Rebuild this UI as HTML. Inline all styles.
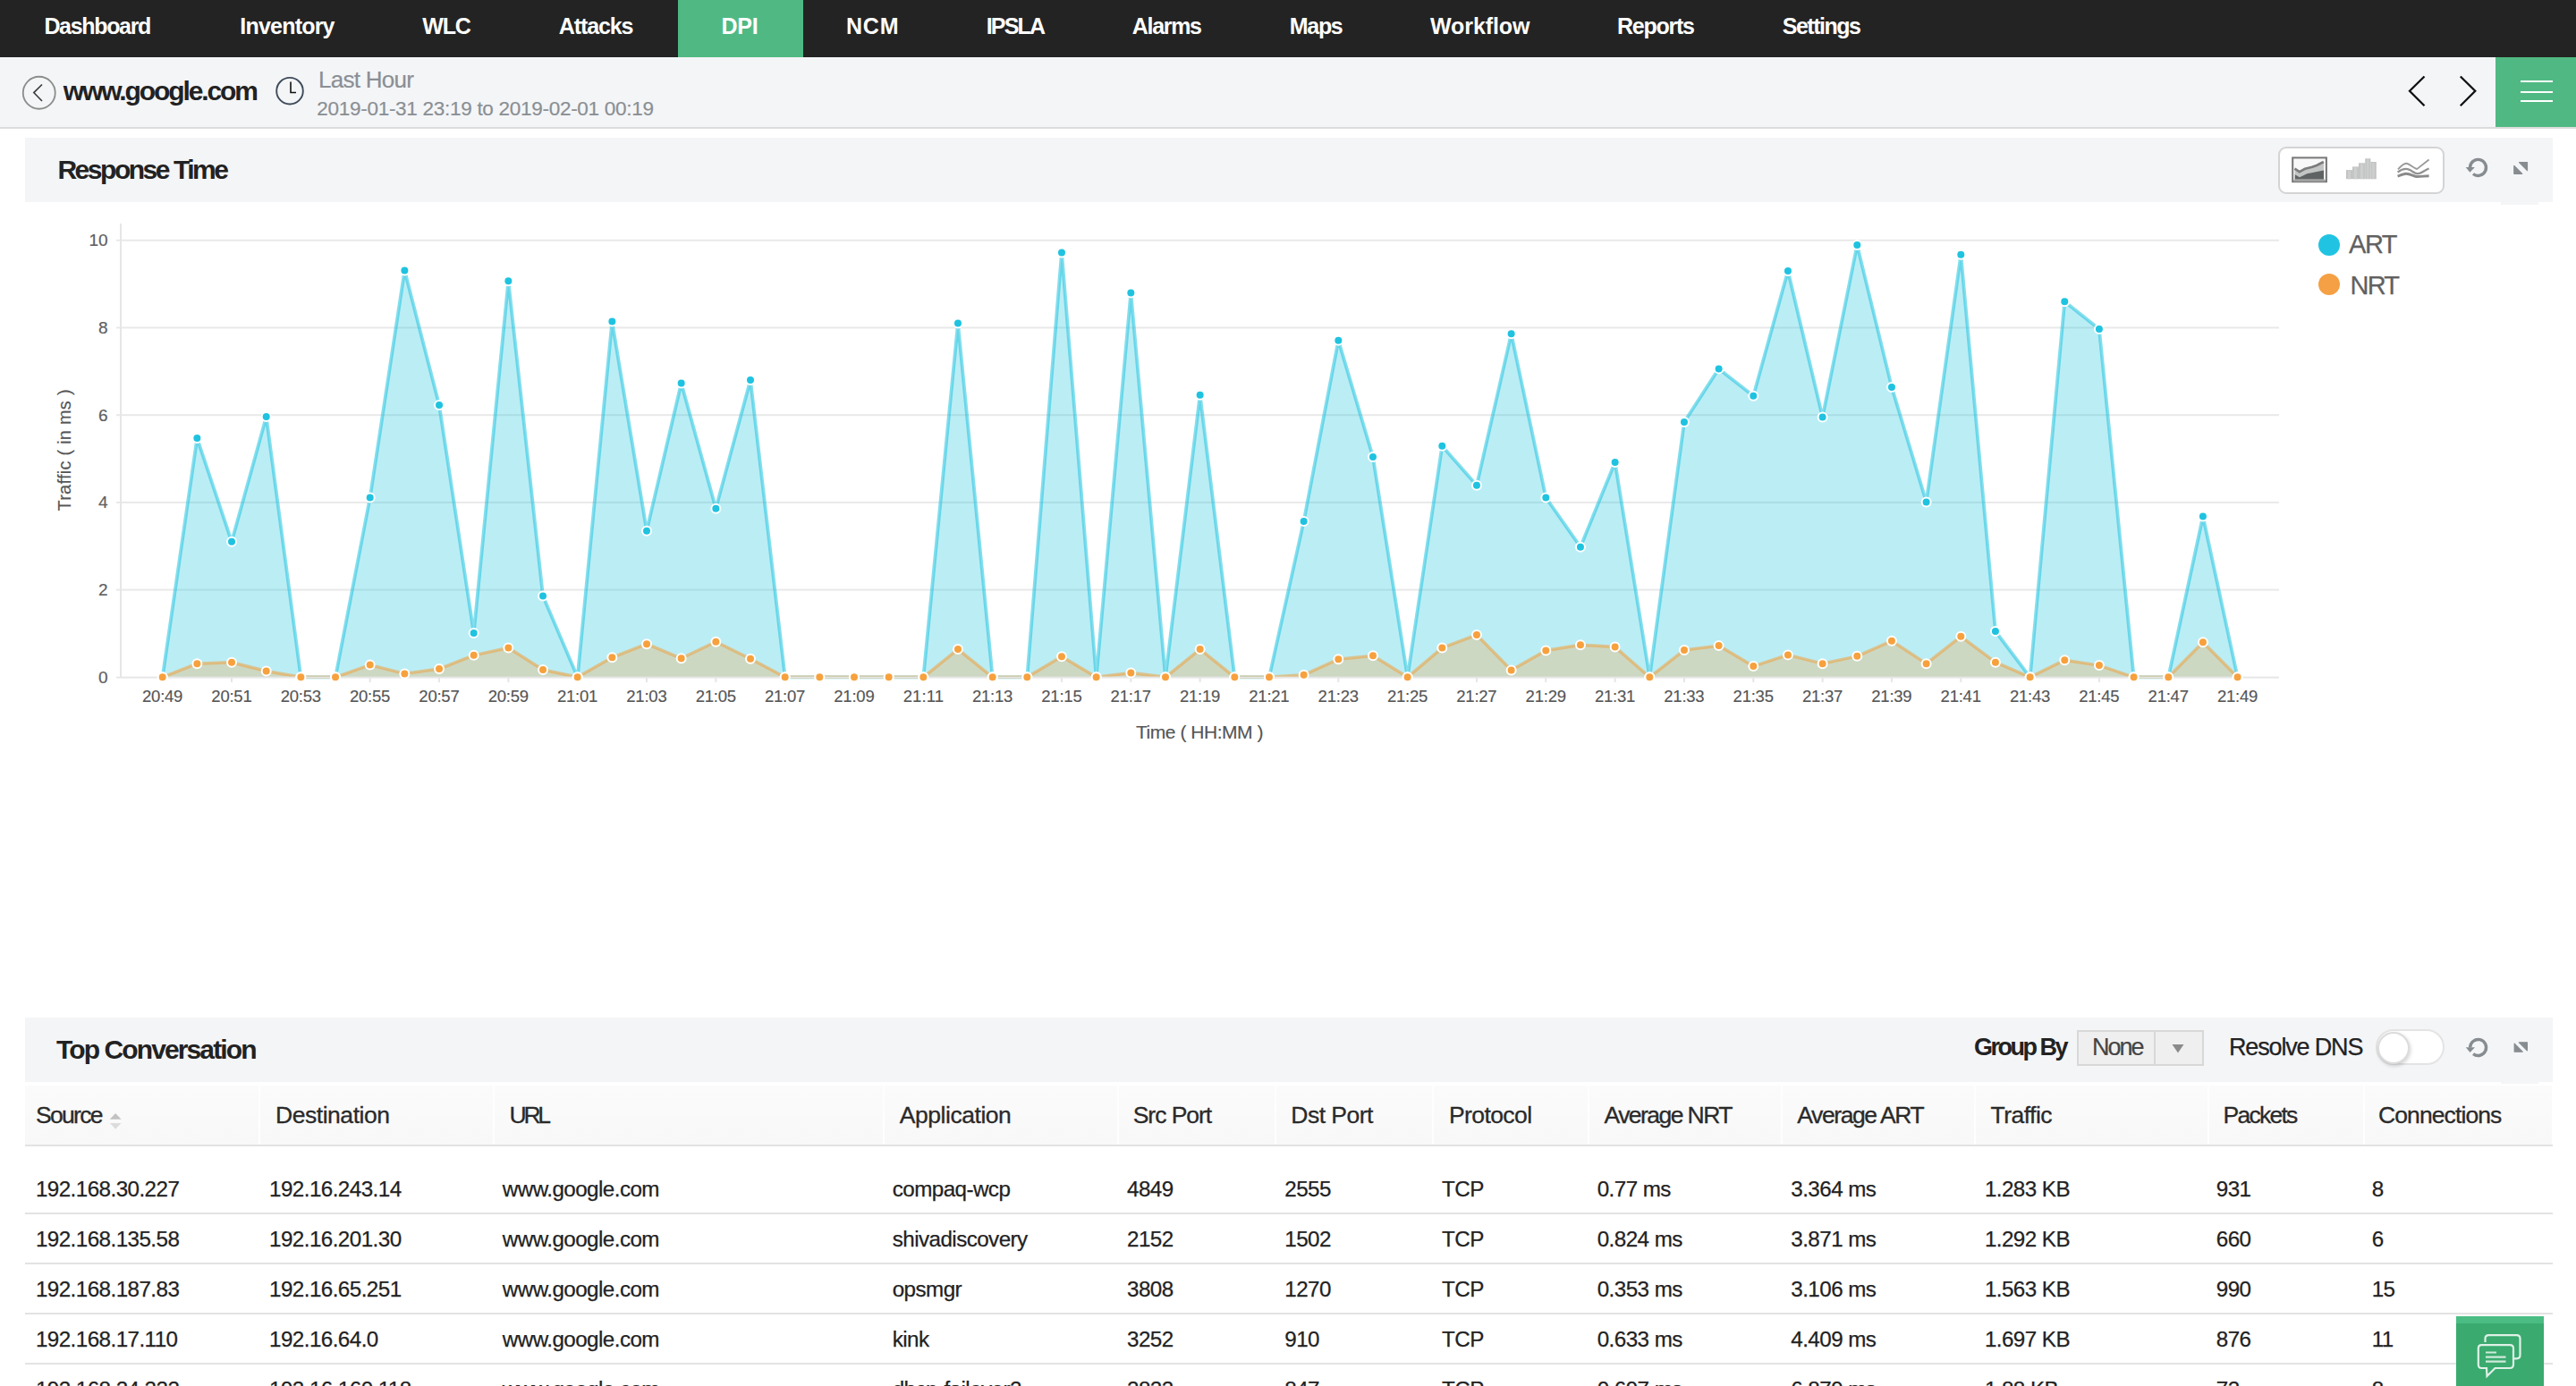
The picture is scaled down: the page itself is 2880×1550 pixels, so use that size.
<!DOCTYPE html>
<html><head><meta charset="utf-8"><style>
html,body{margin:0;padding:0;}
body{width:2880px;height:1550px;overflow:hidden;background:#fff;position:relative;font-family:"Liberation Sans",sans-serif;}
.t{position:absolute;white-space:nowrap;line-height:1;}
</style></head><body>
<div style="position:absolute;left:0;top:0;width:2880px;height:64px;background:#232323"></div>
<div style="position:absolute;left:758px;top:0;width:140px;height:64px;background:#50b983"></div>
<div class="t" style="left:49.40px;top:16.84px;font-size:25px;color:#ffffff;font-weight:bold;letter-spacing:-1.325px;">Dashboard</div>
<div class="t" style="left:268.30px;top:16.84px;font-size:25px;color:#ffffff;font-weight:bold;letter-spacing:-0.788px;">Inventory</div>
<div class="t" style="left:472.30px;top:16.84px;font-size:25px;color:#ffffff;font-weight:bold;letter-spacing:-1.200px;">WLC</div>
<div class="t" style="left:624.70px;top:16.84px;font-size:25px;color:#ffffff;font-weight:bold;letter-spacing:-1.083px;">Attacks</div>
<div class="t" style="left:806.50px;top:16.84px;font-size:25px;color:#ffffff;font-weight:bold;letter-spacing:-0.225px;">DPI</div>
<div class="t" style="left:946.00px;top:16.84px;font-size:25px;color:#ffffff;font-weight:bold;letter-spacing:0.800px;">NCM</div>
<div class="t" style="left:1102.75px;top:16.84px;font-size:25px;color:#ffffff;font-weight:bold;letter-spacing:-1.837px;">IPSLA</div>
<div class="t" style="left:1265.80px;top:16.84px;font-size:25px;color:#ffffff;font-weight:bold;letter-spacing:-1.320px;">Alarms</div>
<div class="t" style="left:1441.75px;top:16.84px;font-size:25px;color:#ffffff;font-weight:bold;letter-spacing:-1.300px;">Maps</div>
<div class="t" style="left:1599.00px;top:16.84px;font-size:25px;color:#ffffff;font-weight:bold;letter-spacing:-0.086px;">Workflow</div>
<div class="t" style="left:1808.00px;top:16.84px;font-size:25px;color:#ffffff;font-weight:bold;letter-spacing:-1.250px;">Reports</div>
<div class="t" style="left:1992.70px;top:16.84px;font-size:25px;color:#ffffff;font-weight:bold;letter-spacing:-1.471px;">Settings</div>
<div style="position:absolute;left:0;top:64px;width:2880px;height:78px;background:#f4f5f7"></div>
<div style="position:absolute;left:0;top:142px;width:2880px;height:2px;background:#dcdcdd"></div>
<div style="position:absolute;left:2790px;top:64px;width:90px;height:78px;background:#50b983"></div>
<div style="position:absolute;left:2818px;top:90px;width:36px;height:2px;background:#fff"></div>
<div style="position:absolute;left:2818px;top:102px;width:36px;height:2px;background:#fff"></div>
<div style="position:absolute;left:2818px;top:112px;width:36px;height:2px;background:#fff"></div>
<svg style="position:absolute;left:0;top:64px" width="2880" height="78" viewBox="0 64 2880 78">
<circle cx="43.75" cy="103.75" r="18" fill="none" stroke="#8c8c8c" stroke-width="1.8"/>
<polyline points="47,94.5 37.8,103.6 47,113" fill="none" stroke="#3a3a3a" stroke-width="1.6"/>
<circle cx="324" cy="101.7" r="14.8" fill="none" stroke="#3f4b5a" stroke-width="1.9"/>
<polyline points="325,91.5 325,103.5 331,103.5" fill="none" stroke="#111" stroke-width="1.6"/>
<polyline points="2710.5,85.5 2694,101.8 2710.5,118.3" fill="none" stroke="#111" stroke-width="2.3"/>
<polyline points="2750.8,85.5 2767.3,101.8 2750.8,118.3" fill="none" stroke="#111" stroke-width="2.3"/>
</svg>
<div class="t" style="left:70.70px;top:87.11px;font-size:30px;color:#222222;font-weight:bold;letter-spacing:-2.100px;">www.google.com</div>
<div class="t" style="left:356.00px;top:75.69px;font-size:26px;color:#8a8f94;letter-spacing:-0.713px;-webkit-text-stroke:0.2px #8a8f94;">Last Hour</div>
<div class="t" style="left:354.30px;top:110.85px;font-size:22.5px;color:#8a8f93;letter-spacing:-0.283px;-webkit-text-stroke:0.2px #8a8f93;">2019-01-31 23:19 to 2019-02-01 00:19</div>
<div style="position:absolute;left:28px;top:154px;width:2826px;height:72px;background:#f4f5f7"></div>
<div style="position:absolute;left:2796px;top:226px;width:42px;height:3px;background:#f4f5f7"></div>
<div class="t" style="left:64.40px;top:175.20px;font-size:30px;color:#222222;font-weight:bold;letter-spacing:-2.467px;">Response Time</div>
<div style="position:absolute;left:2547px;top:163.5px;width:182px;height:49.5px;border:2px solid #d4d4d4;border-radius:9px;background:#fff"></div>
<svg style="position:absolute;left:0;top:0" width="2880" height="1550">
<rect x="135" y="658.59" width="2413" height="2" fill="#e9e9e9"/>
<rect x="130" y="658.59" width="5" height="2" fill="#e9e9e9"/>
<rect x="135" y="560.88" width="2413" height="2" fill="#e9e9e9"/>
<rect x="130" y="560.88" width="5" height="2" fill="#e9e9e9"/>
<rect x="135" y="463.17" width="2413" height="2" fill="#e9e9e9"/>
<rect x="130" y="463.17" width="5" height="2" fill="#e9e9e9"/>
<rect x="135" y="365.46" width="2413" height="2" fill="#e9e9e9"/>
<rect x="130" y="365.46" width="5" height="2" fill="#e9e9e9"/>
<rect x="135" y="267.75" width="2413" height="2" fill="#e9e9e9"/>
<rect x="130" y="267.75" width="5" height="2" fill="#e9e9e9"/>
<rect x="134" y="250" width="2" height="508" fill="#e6e6e6"/>
<path d="M181.70,757.30 L181.70,757.30 L220.36,490.06 L259.03,605.85 L297.69,466.12 L336.36,757.30 L375.02,757.30 L413.69,556.51 L452.35,302.46 L491.02,452.93 L529.68,707.96 L568.35,314.19 L607.01,666.43 L645.68,757.30 L684.35,359.62 L723.01,593.64 L761.67,428.51 L800.34,568.72 L839.00,425.09 L877.67,757.30 L916.34,757.30 L955.00,757.30 L993.66,757.30 L1032.33,757.30 L1070.99,361.57 L1109.66,757.30 L1148.33,757.30 L1186.99,282.43 L1225.65,757.30 L1264.32,327.38 L1302.99,757.30 L1341.65,441.70 L1380.32,757.30 L1418.98,757.30 L1457.64,582.89 L1496.31,380.63 L1534.97,511.07 L1573.64,757.30 L1612.31,498.86 L1650.97,542.83 L1689.63,373.30 L1728.30,556.51 L1766.96,611.71 L1805.63,516.93 L1844.30,757.30 L1882.96,471.99 L1921.62,412.38 L1960.29,442.67 L1998.95,302.95 L2037.62,466.61 L2076.28,274.12 L2114.95,432.90 L2153.61,561.39 L2192.28,284.87 L2230.94,706.00 L2269.61,757.30 L2308.27,337.15 L2346.94,367.93 L2385.60,757.30 L2424.27,757.30 L2462.93,577.51 L2501.60,757.30 L2501.60,757.30 Z" fill="rgba(31,194,223,0.30)"/>
<path d="M181.70,757.30 L220.36,490.06 L259.03,605.85 L297.69,466.12 L336.36,757.30 L375.02,757.30 L413.69,556.51 L452.35,302.46 L491.02,452.93 L529.68,707.96 L568.35,314.19 L607.01,666.43 L645.68,757.30 L684.35,359.62 L723.01,593.64 L761.67,428.51 L800.34,568.72 L839.00,425.09 L877.67,757.30 L916.34,757.30 L955.00,757.30 L993.66,757.30 L1032.33,757.30 L1070.99,361.57 L1109.66,757.30 L1148.33,757.30 L1186.99,282.43 L1225.65,757.30 L1264.32,327.38 L1302.99,757.30 L1341.65,441.70 L1380.32,757.30 L1418.98,757.30 L1457.64,582.89 L1496.31,380.63 L1534.97,511.07 L1573.64,757.30 L1612.31,498.86 L1650.97,542.83 L1689.63,373.30 L1728.30,556.51 L1766.96,611.71 L1805.63,516.93 L1844.30,757.30 L1882.96,471.99 L1921.62,412.38 L1960.29,442.67 L1998.95,302.95 L2037.62,466.61 L2076.28,274.12 L2114.95,432.90 L2153.61,561.39 L2192.28,284.87 L2230.94,706.00 L2269.61,757.30 L2308.27,337.15 L2346.94,367.93 L2385.60,757.30 L2424.27,757.30 L2462.93,577.51 L2501.60,757.30" fill="none" stroke="rgba(31,194,223,0.55)" stroke-width="3.8" stroke-linejoin="round"/>
<path d="M181.70,757.30 L181.70,757.30 L220.36,742.15 L259.03,740.69 L297.69,750.46 L336.36,757.30 L375.02,757.30 L413.69,743.62 L452.35,753.39 L491.02,748.02 L529.68,732.87 L568.35,724.57 L607.01,748.99 L645.68,757.30 L684.35,735.32 L723.01,720.17 L761.67,736.29 L800.34,717.73 L839.00,736.78 L877.67,757.30 L916.34,757.30 L955.00,757.30 L993.66,757.30 L1032.33,757.30 L1070.99,726.03 L1109.66,757.30 L1148.33,757.30 L1186.99,734.34 L1225.65,757.30 L1264.32,752.41 L1302.99,757.30 L1341.65,726.03 L1380.32,757.30 L1418.98,757.30 L1457.64,754.86 L1496.31,737.27 L1534.97,733.36 L1573.64,757.30 L1612.31,724.57 L1650.97,709.91 L1689.63,749.48 L1728.30,727.50 L1766.96,721.15 L1805.63,723.59 L1844.30,757.30 L1882.96,727.01 L1921.62,722.12 L1960.29,745.09 L1998.95,732.38 L2037.62,742.15 L2076.28,733.85 L2114.95,716.75 L2153.61,742.15 L2192.28,711.86 L2230.94,740.69 L2269.61,757.30 L2308.27,738.25 L2346.94,744.11 L2385.60,757.30 L2424.27,757.30 L2462.93,718.22 L2501.60,757.30 L2501.60,757.30 Z" fill="rgba(247,161,62,0.28)"/>
<path d="M181.70,757.30 L220.36,742.15 L259.03,740.69 L297.69,750.46 L336.36,757.30 L375.02,757.30 L413.69,743.62 L452.35,753.39 L491.02,748.02 L529.68,732.87 L568.35,724.57 L607.01,748.99 L645.68,757.30 L684.35,735.32 L723.01,720.17 L761.67,736.29 L800.34,717.73 L839.00,736.78 L877.67,757.30 L916.34,757.30 L955.00,757.30 L993.66,757.30 L1032.33,757.30 L1070.99,726.03 L1109.66,757.30 L1148.33,757.30 L1186.99,734.34 L1225.65,757.30 L1264.32,752.41 L1302.99,757.30 L1341.65,726.03 L1380.32,757.30 L1418.98,757.30 L1457.64,754.86 L1496.31,737.27 L1534.97,733.36 L1573.64,757.30 L1612.31,724.57 L1650.97,709.91 L1689.63,749.48 L1728.30,727.50 L1766.96,721.15 L1805.63,723.59 L1844.30,757.30 L1882.96,727.01 L1921.62,722.12 L1960.29,745.09 L1998.95,732.38 L2037.62,742.15 L2076.28,733.85 L2114.95,716.75 L2153.61,742.15 L2192.28,711.86 L2230.94,740.69 L2269.61,757.30 L2308.27,738.25 L2346.94,744.11 L2385.60,757.30 L2424.27,757.30 L2462.93,718.22 L2501.60,757.30" fill="none" stroke="rgba(240,160,60,0.55)" stroke-width="3.5" stroke-linejoin="round"/>
<rect x="130" y="756.6" width="2418" height="2" fill="#e6e6e6"/>
<rect x="180.70" y="758" width="2" height="5" fill="#e6e6e6"/>
<rect x="258.03" y="758" width="2" height="5" fill="#e6e6e6"/>
<rect x="335.36" y="758" width="2" height="5" fill="#e6e6e6"/>
<rect x="412.69" y="758" width="2" height="5" fill="#e6e6e6"/>
<rect x="490.02" y="758" width="2" height="5" fill="#e6e6e6"/>
<rect x="567.35" y="758" width="2" height="5" fill="#e6e6e6"/>
<rect x="644.68" y="758" width="2" height="5" fill="#e6e6e6"/>
<rect x="722.01" y="758" width="2" height="5" fill="#e6e6e6"/>
<rect x="799.34" y="758" width="2" height="5" fill="#e6e6e6"/>
<rect x="876.67" y="758" width="2" height="5" fill="#e6e6e6"/>
<rect x="954.00" y="758" width="2" height="5" fill="#e6e6e6"/>
<rect x="1031.33" y="758" width="2" height="5" fill="#e6e6e6"/>
<rect x="1108.66" y="758" width="2" height="5" fill="#e6e6e6"/>
<rect x="1185.99" y="758" width="2" height="5" fill="#e6e6e6"/>
<rect x="1263.32" y="758" width="2" height="5" fill="#e6e6e6"/>
<rect x="1340.65" y="758" width="2" height="5" fill="#e6e6e6"/>
<rect x="1417.98" y="758" width="2" height="5" fill="#e6e6e6"/>
<rect x="1495.31" y="758" width="2" height="5" fill="#e6e6e6"/>
<rect x="1572.64" y="758" width="2" height="5" fill="#e6e6e6"/>
<rect x="1649.97" y="758" width="2" height="5" fill="#e6e6e6"/>
<rect x="1727.30" y="758" width="2" height="5" fill="#e6e6e6"/>
<rect x="1804.63" y="758" width="2" height="5" fill="#e6e6e6"/>
<rect x="1881.96" y="758" width="2" height="5" fill="#e6e6e6"/>
<rect x="1959.29" y="758" width="2" height="5" fill="#e6e6e6"/>
<rect x="2036.62" y="758" width="2" height="5" fill="#e6e6e6"/>
<rect x="2113.95" y="758" width="2" height="5" fill="#e6e6e6"/>
<rect x="2191.28" y="758" width="2" height="5" fill="#e6e6e6"/>
<rect x="2268.61" y="758" width="2" height="5" fill="#e6e6e6"/>
<rect x="2345.94" y="758" width="2" height="5" fill="#e6e6e6"/>
<rect x="2423.27" y="758" width="2" height="5" fill="#e6e6e6"/>
<rect x="2500.60" y="758" width="2" height="5" fill="#e6e6e6"/>
<circle cx="181.70" cy="757.30" r="5" fill="#1fc3e0" stroke="#fff" stroke-width="2"/>
<circle cx="220.36" cy="490.06" r="5" fill="#1fc3e0" stroke="#fff" stroke-width="2"/>
<circle cx="259.03" cy="605.85" r="5" fill="#1fc3e0" stroke="#fff" stroke-width="2"/>
<circle cx="297.69" cy="466.12" r="5" fill="#1fc3e0" stroke="#fff" stroke-width="2"/>
<circle cx="336.36" cy="757.30" r="5" fill="#1fc3e0" stroke="#fff" stroke-width="2"/>
<circle cx="375.02" cy="757.30" r="5" fill="#1fc3e0" stroke="#fff" stroke-width="2"/>
<circle cx="413.69" cy="556.51" r="5" fill="#1fc3e0" stroke="#fff" stroke-width="2"/>
<circle cx="452.35" cy="302.46" r="5" fill="#1fc3e0" stroke="#fff" stroke-width="2"/>
<circle cx="491.02" cy="452.93" r="5" fill="#1fc3e0" stroke="#fff" stroke-width="2"/>
<circle cx="529.68" cy="707.96" r="5" fill="#1fc3e0" stroke="#fff" stroke-width="2"/>
<circle cx="568.35" cy="314.19" r="5" fill="#1fc3e0" stroke="#fff" stroke-width="2"/>
<circle cx="607.01" cy="666.43" r="5" fill="#1fc3e0" stroke="#fff" stroke-width="2"/>
<circle cx="645.68" cy="757.30" r="5" fill="#1fc3e0" stroke="#fff" stroke-width="2"/>
<circle cx="684.35" cy="359.62" r="5" fill="#1fc3e0" stroke="#fff" stroke-width="2"/>
<circle cx="723.01" cy="593.64" r="5" fill="#1fc3e0" stroke="#fff" stroke-width="2"/>
<circle cx="761.67" cy="428.51" r="5" fill="#1fc3e0" stroke="#fff" stroke-width="2"/>
<circle cx="800.34" cy="568.72" r="5" fill="#1fc3e0" stroke="#fff" stroke-width="2"/>
<circle cx="839.00" cy="425.09" r="5" fill="#1fc3e0" stroke="#fff" stroke-width="2"/>
<circle cx="877.67" cy="757.30" r="5" fill="#1fc3e0" stroke="#fff" stroke-width="2"/>
<circle cx="916.34" cy="757.30" r="5" fill="#1fc3e0" stroke="#fff" stroke-width="2"/>
<circle cx="955.00" cy="757.30" r="5" fill="#1fc3e0" stroke="#fff" stroke-width="2"/>
<circle cx="993.66" cy="757.30" r="5" fill="#1fc3e0" stroke="#fff" stroke-width="2"/>
<circle cx="1032.33" cy="757.30" r="5" fill="#1fc3e0" stroke="#fff" stroke-width="2"/>
<circle cx="1070.99" cy="361.57" r="5" fill="#1fc3e0" stroke="#fff" stroke-width="2"/>
<circle cx="1109.66" cy="757.30" r="5" fill="#1fc3e0" stroke="#fff" stroke-width="2"/>
<circle cx="1148.33" cy="757.30" r="5" fill="#1fc3e0" stroke="#fff" stroke-width="2"/>
<circle cx="1186.99" cy="282.43" r="5" fill="#1fc3e0" stroke="#fff" stroke-width="2"/>
<circle cx="1225.65" cy="757.30" r="5" fill="#1fc3e0" stroke="#fff" stroke-width="2"/>
<circle cx="1264.32" cy="327.38" r="5" fill="#1fc3e0" stroke="#fff" stroke-width="2"/>
<circle cx="1302.99" cy="757.30" r="5" fill="#1fc3e0" stroke="#fff" stroke-width="2"/>
<circle cx="1341.65" cy="441.70" r="5" fill="#1fc3e0" stroke="#fff" stroke-width="2"/>
<circle cx="1380.32" cy="757.30" r="5" fill="#1fc3e0" stroke="#fff" stroke-width="2"/>
<circle cx="1418.98" cy="757.30" r="5" fill="#1fc3e0" stroke="#fff" stroke-width="2"/>
<circle cx="1457.64" cy="582.89" r="5" fill="#1fc3e0" stroke="#fff" stroke-width="2"/>
<circle cx="1496.31" cy="380.63" r="5" fill="#1fc3e0" stroke="#fff" stroke-width="2"/>
<circle cx="1534.97" cy="511.07" r="5" fill="#1fc3e0" stroke="#fff" stroke-width="2"/>
<circle cx="1573.64" cy="757.30" r="5" fill="#1fc3e0" stroke="#fff" stroke-width="2"/>
<circle cx="1612.31" cy="498.86" r="5" fill="#1fc3e0" stroke="#fff" stroke-width="2"/>
<circle cx="1650.97" cy="542.83" r="5" fill="#1fc3e0" stroke="#fff" stroke-width="2"/>
<circle cx="1689.63" cy="373.30" r="5" fill="#1fc3e0" stroke="#fff" stroke-width="2"/>
<circle cx="1728.30" cy="556.51" r="5" fill="#1fc3e0" stroke="#fff" stroke-width="2"/>
<circle cx="1766.96" cy="611.71" r="5" fill="#1fc3e0" stroke="#fff" stroke-width="2"/>
<circle cx="1805.63" cy="516.93" r="5" fill="#1fc3e0" stroke="#fff" stroke-width="2"/>
<circle cx="1844.30" cy="757.30" r="5" fill="#1fc3e0" stroke="#fff" stroke-width="2"/>
<circle cx="1882.96" cy="471.99" r="5" fill="#1fc3e0" stroke="#fff" stroke-width="2"/>
<circle cx="1921.62" cy="412.38" r="5" fill="#1fc3e0" stroke="#fff" stroke-width="2"/>
<circle cx="1960.29" cy="442.67" r="5" fill="#1fc3e0" stroke="#fff" stroke-width="2"/>
<circle cx="1998.95" cy="302.95" r="5" fill="#1fc3e0" stroke="#fff" stroke-width="2"/>
<circle cx="2037.62" cy="466.61" r="5" fill="#1fc3e0" stroke="#fff" stroke-width="2"/>
<circle cx="2076.28" cy="274.12" r="5" fill="#1fc3e0" stroke="#fff" stroke-width="2"/>
<circle cx="2114.95" cy="432.90" r="5" fill="#1fc3e0" stroke="#fff" stroke-width="2"/>
<circle cx="2153.61" cy="561.39" r="5" fill="#1fc3e0" stroke="#fff" stroke-width="2"/>
<circle cx="2192.28" cy="284.87" r="5" fill="#1fc3e0" stroke="#fff" stroke-width="2"/>
<circle cx="2230.94" cy="706.00" r="5" fill="#1fc3e0" stroke="#fff" stroke-width="2"/>
<circle cx="2269.61" cy="757.30" r="5" fill="#1fc3e0" stroke="#fff" stroke-width="2"/>
<circle cx="2308.27" cy="337.15" r="5" fill="#1fc3e0" stroke="#fff" stroke-width="2"/>
<circle cx="2346.94" cy="367.93" r="5" fill="#1fc3e0" stroke="#fff" stroke-width="2"/>
<circle cx="2385.60" cy="757.30" r="5" fill="#1fc3e0" stroke="#fff" stroke-width="2"/>
<circle cx="2424.27" cy="757.30" r="5" fill="#1fc3e0" stroke="#fff" stroke-width="2"/>
<circle cx="2462.93" cy="577.51" r="5" fill="#1fc3e0" stroke="#fff" stroke-width="2"/>
<circle cx="2501.60" cy="757.30" r="5" fill="#1fc3e0" stroke="#fff" stroke-width="2"/>
<circle cx="181.70" cy="757.30" r="5" fill="#f7a13e" stroke="#fff" stroke-width="2"/>
<circle cx="220.36" cy="742.15" r="5" fill="#f7a13e" stroke="#fff" stroke-width="2"/>
<circle cx="259.03" cy="740.69" r="5" fill="#f7a13e" stroke="#fff" stroke-width="2"/>
<circle cx="297.69" cy="750.46" r="5" fill="#f7a13e" stroke="#fff" stroke-width="2"/>
<circle cx="336.36" cy="757.30" r="5" fill="#f7a13e" stroke="#fff" stroke-width="2"/>
<circle cx="375.02" cy="757.30" r="5" fill="#f7a13e" stroke="#fff" stroke-width="2"/>
<circle cx="413.69" cy="743.62" r="5" fill="#f7a13e" stroke="#fff" stroke-width="2"/>
<circle cx="452.35" cy="753.39" r="5" fill="#f7a13e" stroke="#fff" stroke-width="2"/>
<circle cx="491.02" cy="748.02" r="5" fill="#f7a13e" stroke="#fff" stroke-width="2"/>
<circle cx="529.68" cy="732.87" r="5" fill="#f7a13e" stroke="#fff" stroke-width="2"/>
<circle cx="568.35" cy="724.57" r="5" fill="#f7a13e" stroke="#fff" stroke-width="2"/>
<circle cx="607.01" cy="748.99" r="5" fill="#f7a13e" stroke="#fff" stroke-width="2"/>
<circle cx="645.68" cy="757.30" r="5" fill="#f7a13e" stroke="#fff" stroke-width="2"/>
<circle cx="684.35" cy="735.32" r="5" fill="#f7a13e" stroke="#fff" stroke-width="2"/>
<circle cx="723.01" cy="720.17" r="5" fill="#f7a13e" stroke="#fff" stroke-width="2"/>
<circle cx="761.67" cy="736.29" r="5" fill="#f7a13e" stroke="#fff" stroke-width="2"/>
<circle cx="800.34" cy="717.73" r="5" fill="#f7a13e" stroke="#fff" stroke-width="2"/>
<circle cx="839.00" cy="736.78" r="5" fill="#f7a13e" stroke="#fff" stroke-width="2"/>
<circle cx="877.67" cy="757.30" r="5" fill="#f7a13e" stroke="#fff" stroke-width="2"/>
<circle cx="916.34" cy="757.30" r="5" fill="#f7a13e" stroke="#fff" stroke-width="2"/>
<circle cx="955.00" cy="757.30" r="5" fill="#f7a13e" stroke="#fff" stroke-width="2"/>
<circle cx="993.66" cy="757.30" r="5" fill="#f7a13e" stroke="#fff" stroke-width="2"/>
<circle cx="1032.33" cy="757.30" r="5" fill="#f7a13e" stroke="#fff" stroke-width="2"/>
<circle cx="1070.99" cy="726.03" r="5" fill="#f7a13e" stroke="#fff" stroke-width="2"/>
<circle cx="1109.66" cy="757.30" r="5" fill="#f7a13e" stroke="#fff" stroke-width="2"/>
<circle cx="1148.33" cy="757.30" r="5" fill="#f7a13e" stroke="#fff" stroke-width="2"/>
<circle cx="1186.99" cy="734.34" r="5" fill="#f7a13e" stroke="#fff" stroke-width="2"/>
<circle cx="1225.65" cy="757.30" r="5" fill="#f7a13e" stroke="#fff" stroke-width="2"/>
<circle cx="1264.32" cy="752.41" r="5" fill="#f7a13e" stroke="#fff" stroke-width="2"/>
<circle cx="1302.99" cy="757.30" r="5" fill="#f7a13e" stroke="#fff" stroke-width="2"/>
<circle cx="1341.65" cy="726.03" r="5" fill="#f7a13e" stroke="#fff" stroke-width="2"/>
<circle cx="1380.32" cy="757.30" r="5" fill="#f7a13e" stroke="#fff" stroke-width="2"/>
<circle cx="1418.98" cy="757.30" r="5" fill="#f7a13e" stroke="#fff" stroke-width="2"/>
<circle cx="1457.64" cy="754.86" r="5" fill="#f7a13e" stroke="#fff" stroke-width="2"/>
<circle cx="1496.31" cy="737.27" r="5" fill="#f7a13e" stroke="#fff" stroke-width="2"/>
<circle cx="1534.97" cy="733.36" r="5" fill="#f7a13e" stroke="#fff" stroke-width="2"/>
<circle cx="1573.64" cy="757.30" r="5" fill="#f7a13e" stroke="#fff" stroke-width="2"/>
<circle cx="1612.31" cy="724.57" r="5" fill="#f7a13e" stroke="#fff" stroke-width="2"/>
<circle cx="1650.97" cy="709.91" r="5" fill="#f7a13e" stroke="#fff" stroke-width="2"/>
<circle cx="1689.63" cy="749.48" r="5" fill="#f7a13e" stroke="#fff" stroke-width="2"/>
<circle cx="1728.30" cy="727.50" r="5" fill="#f7a13e" stroke="#fff" stroke-width="2"/>
<circle cx="1766.96" cy="721.15" r="5" fill="#f7a13e" stroke="#fff" stroke-width="2"/>
<circle cx="1805.63" cy="723.59" r="5" fill="#f7a13e" stroke="#fff" stroke-width="2"/>
<circle cx="1844.30" cy="757.30" r="5" fill="#f7a13e" stroke="#fff" stroke-width="2"/>
<circle cx="1882.96" cy="727.01" r="5" fill="#f7a13e" stroke="#fff" stroke-width="2"/>
<circle cx="1921.62" cy="722.12" r="5" fill="#f7a13e" stroke="#fff" stroke-width="2"/>
<circle cx="1960.29" cy="745.09" r="5" fill="#f7a13e" stroke="#fff" stroke-width="2"/>
<circle cx="1998.95" cy="732.38" r="5" fill="#f7a13e" stroke="#fff" stroke-width="2"/>
<circle cx="2037.62" cy="742.15" r="5" fill="#f7a13e" stroke="#fff" stroke-width="2"/>
<circle cx="2076.28" cy="733.85" r="5" fill="#f7a13e" stroke="#fff" stroke-width="2"/>
<circle cx="2114.95" cy="716.75" r="5" fill="#f7a13e" stroke="#fff" stroke-width="2"/>
<circle cx="2153.61" cy="742.15" r="5" fill="#f7a13e" stroke="#fff" stroke-width="2"/>
<circle cx="2192.28" cy="711.86" r="5" fill="#f7a13e" stroke="#fff" stroke-width="2"/>
<circle cx="2230.94" cy="740.69" r="5" fill="#f7a13e" stroke="#fff" stroke-width="2"/>
<circle cx="2269.61" cy="757.30" r="5" fill="#f7a13e" stroke="#fff" stroke-width="2"/>
<circle cx="2308.27" cy="738.25" r="5" fill="#f7a13e" stroke="#fff" stroke-width="2"/>
<circle cx="2346.94" cy="744.11" r="5" fill="#f7a13e" stroke="#fff" stroke-width="2"/>
<circle cx="2385.60" cy="757.30" r="5" fill="#f7a13e" stroke="#fff" stroke-width="2"/>
<circle cx="2424.27" cy="757.30" r="5" fill="#f7a13e" stroke="#fff" stroke-width="2"/>
<circle cx="2462.93" cy="718.22" r="5" fill="#f7a13e" stroke="#fff" stroke-width="2"/>
<circle cx="2501.60" cy="757.30" r="5" fill="#f7a13e" stroke="#fff" stroke-width="2"/>
<circle cx="2604" cy="274" r="12" fill="#20c4e2"/>
<circle cx="2604" cy="318" r="12" fill="#f5a044"/>
</svg>
<div class="t" style="left:2626.00px;top:259.45px;font-size:29px;color:#616161;letter-spacing:-1.450px;-webkit-text-stroke:0.25px #616161;">ART</div>
<div class="t" style="left:2627.60px;top:305.45px;font-size:29px;color:#616161;letter-spacing:-1.850px;-webkit-text-stroke:0.25px #616161;">NRT</div>
<div class="t" style="left:109.90px;top:747.82px;font-size:19px;color:#606060;-webkit-text-stroke:0.2px #606060;">0</div>
<div class="t" style="left:109.90px;top:650.11px;font-size:19px;color:#606060;-webkit-text-stroke:0.2px #606060;">2</div>
<div class="t" style="left:109.90px;top:552.40px;font-size:19px;color:#606060;-webkit-text-stroke:0.2px #606060;">4</div>
<div class="t" style="left:109.90px;top:454.69px;font-size:19px;color:#606060;-webkit-text-stroke:0.2px #606060;">6</div>
<div class="t" style="left:109.90px;top:356.98px;font-size:19px;color:#606060;-webkit-text-stroke:0.2px #606060;">8</div>
<div class="t" style="left:99.40px;top:259.27px;font-size:19px;color:#606060;-webkit-text-stroke:0.2px #606060;">10</div>
<div class="t" style="left:159.00px;top:770.14px;font-size:18.5px;color:#555555;letter-spacing:-0.225px;-webkit-text-stroke:0.15px #555;">20:49</div>
<div class="t" style="left:236.33px;top:770.14px;font-size:18.5px;color:#555555;letter-spacing:-0.225px;-webkit-text-stroke:0.15px #555;">20:51</div>
<div class="t" style="left:313.66px;top:770.14px;font-size:18.5px;color:#555555;letter-spacing:-0.225px;-webkit-text-stroke:0.15px #555;">20:53</div>
<div class="t" style="left:390.99px;top:770.14px;font-size:18.5px;color:#555555;letter-spacing:-0.225px;-webkit-text-stroke:0.15px #555;">20:55</div>
<div class="t" style="left:468.32px;top:770.14px;font-size:18.5px;color:#555555;letter-spacing:-0.225px;-webkit-text-stroke:0.15px #555;">20:57</div>
<div class="t" style="left:545.65px;top:770.14px;font-size:18.5px;color:#555555;letter-spacing:-0.225px;-webkit-text-stroke:0.15px #555;">20:59</div>
<div class="t" style="left:622.98px;top:770.14px;font-size:18.5px;color:#555555;letter-spacing:-0.225px;-webkit-text-stroke:0.15px #555;">21:01</div>
<div class="t" style="left:700.31px;top:770.14px;font-size:18.5px;color:#555555;letter-spacing:-0.225px;-webkit-text-stroke:0.15px #555;">21:03</div>
<div class="t" style="left:777.64px;top:770.14px;font-size:18.5px;color:#555555;letter-spacing:-0.225px;-webkit-text-stroke:0.15px #555;">21:05</div>
<div class="t" style="left:854.97px;top:770.14px;font-size:18.5px;color:#555555;letter-spacing:-0.225px;-webkit-text-stroke:0.15px #555;">21:07</div>
<div class="t" style="left:932.30px;top:770.14px;font-size:18.5px;color:#555555;letter-spacing:-0.225px;-webkit-text-stroke:0.15px #555;">21:09</div>
<div class="t" style="left:1009.63px;top:770.14px;font-size:18.5px;color:#555555;letter-spacing:0.125px;-webkit-text-stroke:0.15px #555;">21:11</div>
<div class="t" style="left:1086.96px;top:770.14px;font-size:18.5px;color:#555555;letter-spacing:-0.225px;-webkit-text-stroke:0.15px #555;">21:13</div>
<div class="t" style="left:1164.29px;top:770.14px;font-size:18.5px;color:#555555;letter-spacing:-0.225px;-webkit-text-stroke:0.15px #555;">21:15</div>
<div class="t" style="left:1241.62px;top:770.14px;font-size:18.5px;color:#555555;letter-spacing:-0.225px;-webkit-text-stroke:0.15px #555;">21:17</div>
<div class="t" style="left:1318.95px;top:770.14px;font-size:18.5px;color:#555555;letter-spacing:-0.225px;-webkit-text-stroke:0.15px #555;">21:19</div>
<div class="t" style="left:1396.28px;top:770.14px;font-size:18.5px;color:#555555;letter-spacing:-0.225px;-webkit-text-stroke:0.15px #555;">21:21</div>
<div class="t" style="left:1473.61px;top:770.14px;font-size:18.5px;color:#555555;letter-spacing:-0.225px;-webkit-text-stroke:0.15px #555;">21:23</div>
<div class="t" style="left:1550.94px;top:770.14px;font-size:18.5px;color:#555555;letter-spacing:-0.225px;-webkit-text-stroke:0.15px #555;">21:25</div>
<div class="t" style="left:1628.27px;top:770.14px;font-size:18.5px;color:#555555;letter-spacing:-0.225px;-webkit-text-stroke:0.15px #555;">21:27</div>
<div class="t" style="left:1705.60px;top:770.14px;font-size:18.5px;color:#555555;letter-spacing:-0.225px;-webkit-text-stroke:0.15px #555;">21:29</div>
<div class="t" style="left:1782.93px;top:770.14px;font-size:18.5px;color:#555555;letter-spacing:-0.225px;-webkit-text-stroke:0.15px #555;">21:31</div>
<div class="t" style="left:1860.26px;top:770.14px;font-size:18.5px;color:#555555;letter-spacing:-0.225px;-webkit-text-stroke:0.15px #555;">21:33</div>
<div class="t" style="left:1937.59px;top:770.14px;font-size:18.5px;color:#555555;letter-spacing:-0.225px;-webkit-text-stroke:0.15px #555;">21:35</div>
<div class="t" style="left:2014.92px;top:770.14px;font-size:18.5px;color:#555555;letter-spacing:-0.225px;-webkit-text-stroke:0.15px #555;">21:37</div>
<div class="t" style="left:2092.25px;top:770.14px;font-size:18.5px;color:#555555;letter-spacing:-0.225px;-webkit-text-stroke:0.15px #555;">21:39</div>
<div class="t" style="left:2169.58px;top:770.14px;font-size:18.5px;color:#555555;letter-spacing:-0.225px;-webkit-text-stroke:0.15px #555;">21:41</div>
<div class="t" style="left:2246.91px;top:770.14px;font-size:18.5px;color:#555555;letter-spacing:-0.225px;-webkit-text-stroke:0.15px #555;">21:43</div>
<div class="t" style="left:2324.24px;top:770.14px;font-size:18.5px;color:#555555;letter-spacing:-0.225px;-webkit-text-stroke:0.15px #555;">21:45</div>
<div class="t" style="left:2401.57px;top:770.14px;font-size:18.5px;color:#555555;letter-spacing:-0.225px;-webkit-text-stroke:0.15px #555;">21:47</div>
<div class="t" style="left:2478.90px;top:770.14px;font-size:18.5px;color:#555555;letter-spacing:-0.225px;-webkit-text-stroke:0.15px #555;">21:49</div>
<div class="t" style="left:1270.00px;top:808.02px;font-size:21px;color:#555555;letter-spacing:-0.469px;-webkit-text-stroke:0.15px #555;">Time ( HH:MM )</div>
<div class="t" style="left:77.3px;top:504px;font-size:20px;color:#555;transform-origin:0 0;transform:rotate(-90deg) translate(-67.5px,-15.5px);letter-spacing:0.24px;-webkit-text-stroke:0.15px #555">Traffic ( in ms )</div>
<div style="position:absolute;left:28px;top:1138px;width:2826px;height:72px;background:#f4f5f7"></div>
<div style="position:absolute;left:2796px;top:1210px;width:42px;height:2px;background:#f4f5f7"></div>
<div class="t" style="left:63.00px;top:1159.11px;font-size:30px;color:#222222;font-weight:bold;letter-spacing:-1.887px;">Top Conversation</div>
<div class="t" style="left:2207.00px;top:1158.34px;font-size:27px;color:#222222;font-weight:bold;letter-spacing:-2.486px;">Group By</div>
<div style="position:absolute;left:2322px;top:1152.3px;width:137.7px;height:35.4px;border:2px solid #d8d8d8;background:#efefef"></div>
<div style="position:absolute;left:2408px;top:1154px;width:2px;height:36px;background:#d8d8d8"></div>
<div class="t" style="left:2339.00px;top:1158.34px;font-size:27px;color:#444444;letter-spacing:-2.033px;-webkit-text-stroke:0.2px #444;">None</div>
<svg style="position:absolute;left:2420px;top:1160px" width="30" height="25"><polygon points="8.5,8 21.5,8 15,17.5" fill="#8a8a8a"/></svg>
<div class="t" style="left:2492.00px;top:1158.34px;font-size:27px;color:#222222;letter-spacing:-1.160px;-webkit-text-stroke:0.25px #222;">Resolve DNS</div>
<div style="position:absolute;left:2655.5px;top:1151px;width:73.7px;height:36px;border:2px solid #e4e4e4;border-radius:20px;background:#fff"></div>
<div style="position:absolute;left:2657.8px;top:1154px;width:32px;height:32px;border:2px solid #dcdcdc;border-radius:50%;background:#fff;box-shadow:1px 2px 4px rgba(0,0,0,0.18)"></div>
<div style="position:absolute;left:28px;top:1214px;width:2825px;height:66px;background:linear-gradient(#fbfbfb,#f8f8f8)"></div>
<div style="position:absolute;left:28px;top:1280px;width:2826px;height:2px;background:#e2e2e2"></div>
<div style="position:absolute;left:289px;top:1214px;width:1.5px;height:66px;background:#fefefe"></div>
<div style="position:absolute;left:551px;top:1214px;width:1.5px;height:66px;background:#fefefe"></div>
<div style="position:absolute;left:987px;top:1214px;width:1.5px;height:66px;background:#fefefe"></div>
<div style="position:absolute;left:1249px;top:1214px;width:1.5px;height:66px;background:#fefefe"></div>
<div style="position:absolute;left:1425px;top:1214px;width:1.5px;height:66px;background:#fefefe"></div>
<div style="position:absolute;left:1601px;top:1214px;width:1.5px;height:66px;background:#fefefe"></div>
<div style="position:absolute;left:1775px;top:1214px;width:1.5px;height:66px;background:#fefefe"></div>
<div style="position:absolute;left:1991px;top:1214px;width:1.5px;height:66px;background:#fefefe"></div>
<div style="position:absolute;left:2207px;top:1214px;width:1.5px;height:66px;background:#fefefe"></div>
<div style="position:absolute;left:2468px;top:1214px;width:1.5px;height:66px;background:#fefefe"></div>
<div style="position:absolute;left:2642px;top:1214px;width:1.5px;height:66px;background:#fefefe"></div>
<div class="t" style="left:40.00px;top:1233.57px;font-size:26.5px;color:#2a2a2a;letter-spacing:-1.700px;-webkit-text-stroke:0.3px #2a2a2a;">Source</div>
<div class="t" style="left:308.00px;top:1233.57px;font-size:26.5px;color:#2a2a2a;letter-spacing:-0.460px;-webkit-text-stroke:0.3px #2a2a2a;">Destination</div>
<div class="t" style="left:569.50px;top:1233.57px;font-size:26.5px;color:#2a2a2a;letter-spacing:-3.250px;-webkit-text-stroke:0.3px #2a2a2a;">URL</div>
<div class="t" style="left:1005.80px;top:1233.57px;font-size:26.5px;color:#2a2a2a;letter-spacing:-0.460px;-webkit-text-stroke:0.3px #2a2a2a;">Application</div>
<div class="t" style="left:1266.70px;top:1233.57px;font-size:26.5px;color:#2a2a2a;letter-spacing:-1.029px;-webkit-text-stroke:0.3px #2a2a2a;">Src Port</div>
<div class="t" style="left:1443.30px;top:1233.57px;font-size:26.5px;color:#2a2a2a;letter-spacing:-0.529px;-webkit-text-stroke:0.3px #2a2a2a;">Dst Port</div>
<div class="t" style="left:1620.00px;top:1233.57px;font-size:26.5px;color:#2a2a2a;letter-spacing:-0.600px;-webkit-text-stroke:0.3px #2a2a2a;">Protocol</div>
<div class="t" style="left:1793.50px;top:1233.57px;font-size:26.5px;color:#2a2a2a;letter-spacing:-1.560px;-webkit-text-stroke:0.3px #2a2a2a;">Average NRT</div>
<div class="t" style="left:2009.30px;top:1233.57px;font-size:26.5px;color:#2a2a2a;letter-spacing:-1.420px;-webkit-text-stroke:0.3px #2a2a2a;">Average ART</div>
<div class="t" style="left:2225.50px;top:1233.57px;font-size:26.5px;color:#2a2a2a;letter-spacing:-0.517px;-webkit-text-stroke:0.3px #2a2a2a;">Traffic</div>
<div class="t" style="left:2485.60px;top:1233.57px;font-size:26.5px;color:#2a2a2a;letter-spacing:-1.750px;-webkit-text-stroke:0.3px #2a2a2a;">Packets</div>
<div class="t" style="left:2659.00px;top:1233.57px;font-size:26.5px;color:#2a2a2a;letter-spacing:-0.900px;-webkit-text-stroke:0.3px #2a2a2a;">Connections</div>
<svg style="position:absolute;left:118px;top:1240px" width="24" height="26"><polygon points="4.8,11.8 17.5,11.8 11.15,4.9" fill="#c2c2c2"/><polygon points="4.8,15.9 17.5,15.9 11.15,22.8" fill="#dcdcdc"/></svg>
<div class="t" style="left:39.90px;top:1318.11px;font-size:24.2px;color:#222222;letter-spacing:-0.55px;-webkit-text-stroke:0.25px #222;">192.168.30.227</div>
<div class="t" style="left:301.00px;top:1318.11px;font-size:24.2px;color:#222222;letter-spacing:-0.55px;-webkit-text-stroke:0.25px #222;">192.16.243.14</div>
<div class="t" style="left:561.80px;top:1318.11px;font-size:24.2px;color:#222222;letter-spacing:-0.55px;-webkit-text-stroke:0.25px #222;">www.google.com</div>
<div class="t" style="left:997.70px;top:1318.11px;font-size:24.2px;color:#222222;letter-spacing:-0.55px;-webkit-text-stroke:0.25px #222;">compaq-wcp</div>
<div class="t" style="left:1260.00px;top:1318.11px;font-size:24.2px;color:#222222;letter-spacing:-0.55px;-webkit-text-stroke:0.25px #222;">4849</div>
<div class="t" style="left:1436.30px;top:1318.11px;font-size:24.2px;color:#222222;letter-spacing:-0.55px;-webkit-text-stroke:0.25px #222;">2555</div>
<div class="t" style="left:1612.00px;top:1318.11px;font-size:24.2px;color:#222222;letter-spacing:-0.55px;-webkit-text-stroke:0.25px #222;">TCP</div>
<div class="t" style="left:1785.70px;top:1318.11px;font-size:24.2px;color:#222222;letter-spacing:-0.55px;-webkit-text-stroke:0.25px #222;">0.77 ms</div>
<div class="t" style="left:2002.30px;top:1318.11px;font-size:24.2px;color:#222222;letter-spacing:-0.55px;-webkit-text-stroke:0.25px #222;">3.364 ms</div>
<div class="t" style="left:2218.90px;top:1318.11px;font-size:24.2px;color:#222222;letter-spacing:-0.55px;-webkit-text-stroke:0.25px #222;">1.283 KB</div>
<div class="t" style="left:2477.80px;top:1318.11px;font-size:24.2px;color:#222222;letter-spacing:-0.55px;-webkit-text-stroke:0.25px #222;">931</div>
<div class="t" style="left:2651.70px;top:1318.11px;font-size:24.2px;color:#222222;letter-spacing:-0.55px;-webkit-text-stroke:0.25px #222;">8</div>
<div style="position:absolute;left:28px;top:1356.4px;width:2826px;height:2px;background:#e3e3e3"></div>
<div class="t" style="left:39.90px;top:1374.11px;font-size:24.2px;color:#222222;letter-spacing:-0.55px;-webkit-text-stroke:0.25px #222;">192.168.135.58</div>
<div class="t" style="left:301.00px;top:1374.11px;font-size:24.2px;color:#222222;letter-spacing:-0.55px;-webkit-text-stroke:0.25px #222;">192.16.201.30</div>
<div class="t" style="left:561.80px;top:1374.11px;font-size:24.2px;color:#222222;letter-spacing:-0.55px;-webkit-text-stroke:0.25px #222;">www.google.com</div>
<div class="t" style="left:997.70px;top:1374.11px;font-size:24.2px;color:#222222;letter-spacing:-0.55px;-webkit-text-stroke:0.25px #222;">shivadiscovery</div>
<div class="t" style="left:1260.00px;top:1374.11px;font-size:24.2px;color:#222222;letter-spacing:-0.55px;-webkit-text-stroke:0.25px #222;">2152</div>
<div class="t" style="left:1436.30px;top:1374.11px;font-size:24.2px;color:#222222;letter-spacing:-0.55px;-webkit-text-stroke:0.25px #222;">1502</div>
<div class="t" style="left:1612.00px;top:1374.11px;font-size:24.2px;color:#222222;letter-spacing:-0.55px;-webkit-text-stroke:0.25px #222;">TCP</div>
<div class="t" style="left:1785.70px;top:1374.11px;font-size:24.2px;color:#222222;letter-spacing:-0.55px;-webkit-text-stroke:0.25px #222;">0.824 ms</div>
<div class="t" style="left:2002.30px;top:1374.11px;font-size:24.2px;color:#222222;letter-spacing:-0.55px;-webkit-text-stroke:0.25px #222;">3.871 ms</div>
<div class="t" style="left:2218.90px;top:1374.11px;font-size:24.2px;color:#222222;letter-spacing:-0.55px;-webkit-text-stroke:0.25px #222;">1.292 KB</div>
<div class="t" style="left:2477.80px;top:1374.11px;font-size:24.2px;color:#222222;letter-spacing:-0.55px;-webkit-text-stroke:0.25px #222;">660</div>
<div class="t" style="left:2651.70px;top:1374.11px;font-size:24.2px;color:#222222;letter-spacing:-0.55px;-webkit-text-stroke:0.25px #222;">6</div>
<div style="position:absolute;left:28px;top:1412.4px;width:2826px;height:2px;background:#e3e3e3"></div>
<div class="t" style="left:39.90px;top:1430.11px;font-size:24.2px;color:#222222;letter-spacing:-0.55px;-webkit-text-stroke:0.25px #222;">192.168.187.83</div>
<div class="t" style="left:301.00px;top:1430.11px;font-size:24.2px;color:#222222;letter-spacing:-0.55px;-webkit-text-stroke:0.25px #222;">192.16.65.251</div>
<div class="t" style="left:561.80px;top:1430.11px;font-size:24.2px;color:#222222;letter-spacing:-0.55px;-webkit-text-stroke:0.25px #222;">www.google.com</div>
<div class="t" style="left:997.70px;top:1430.11px;font-size:24.2px;color:#222222;letter-spacing:-0.55px;-webkit-text-stroke:0.25px #222;">opsmgr</div>
<div class="t" style="left:1260.00px;top:1430.11px;font-size:24.2px;color:#222222;letter-spacing:-0.55px;-webkit-text-stroke:0.25px #222;">3808</div>
<div class="t" style="left:1436.30px;top:1430.11px;font-size:24.2px;color:#222222;letter-spacing:-0.55px;-webkit-text-stroke:0.25px #222;">1270</div>
<div class="t" style="left:1612.00px;top:1430.11px;font-size:24.2px;color:#222222;letter-spacing:-0.55px;-webkit-text-stroke:0.25px #222;">TCP</div>
<div class="t" style="left:1785.70px;top:1430.11px;font-size:24.2px;color:#222222;letter-spacing:-0.55px;-webkit-text-stroke:0.25px #222;">0.353 ms</div>
<div class="t" style="left:2002.30px;top:1430.11px;font-size:24.2px;color:#222222;letter-spacing:-0.55px;-webkit-text-stroke:0.25px #222;">3.106 ms</div>
<div class="t" style="left:2218.90px;top:1430.11px;font-size:24.2px;color:#222222;letter-spacing:-0.55px;-webkit-text-stroke:0.25px #222;">1.563 KB</div>
<div class="t" style="left:2477.80px;top:1430.11px;font-size:24.2px;color:#222222;letter-spacing:-0.55px;-webkit-text-stroke:0.25px #222;">990</div>
<div class="t" style="left:2651.70px;top:1430.11px;font-size:24.2px;color:#222222;letter-spacing:-0.55px;-webkit-text-stroke:0.25px #222;">15</div>
<div style="position:absolute;left:28px;top:1468.4px;width:2826px;height:2px;background:#e3e3e3"></div>
<div class="t" style="left:39.90px;top:1486.11px;font-size:24.2px;color:#222222;letter-spacing:-0.55px;-webkit-text-stroke:0.25px #222;">192.168.17.110</div>
<div class="t" style="left:301.00px;top:1486.11px;font-size:24.2px;color:#222222;letter-spacing:-0.55px;-webkit-text-stroke:0.25px #222;">192.16.64.0</div>
<div class="t" style="left:561.80px;top:1486.11px;font-size:24.2px;color:#222222;letter-spacing:-0.55px;-webkit-text-stroke:0.25px #222;">www.google.com</div>
<div class="t" style="left:997.70px;top:1486.11px;font-size:24.2px;color:#222222;letter-spacing:-0.55px;-webkit-text-stroke:0.25px #222;">kink</div>
<div class="t" style="left:1260.00px;top:1486.11px;font-size:24.2px;color:#222222;letter-spacing:-0.55px;-webkit-text-stroke:0.25px #222;">3252</div>
<div class="t" style="left:1436.30px;top:1486.11px;font-size:24.2px;color:#222222;letter-spacing:-0.55px;-webkit-text-stroke:0.25px #222;">910</div>
<div class="t" style="left:1612.00px;top:1486.11px;font-size:24.2px;color:#222222;letter-spacing:-0.55px;-webkit-text-stroke:0.25px #222;">TCP</div>
<div class="t" style="left:1785.70px;top:1486.11px;font-size:24.2px;color:#222222;letter-spacing:-0.55px;-webkit-text-stroke:0.25px #222;">0.633 ms</div>
<div class="t" style="left:2002.30px;top:1486.11px;font-size:24.2px;color:#222222;letter-spacing:-0.55px;-webkit-text-stroke:0.25px #222;">4.409 ms</div>
<div class="t" style="left:2218.90px;top:1486.11px;font-size:24.2px;color:#222222;letter-spacing:-0.55px;-webkit-text-stroke:0.25px #222;">1.697 KB</div>
<div class="t" style="left:2477.80px;top:1486.11px;font-size:24.2px;color:#222222;letter-spacing:-0.55px;-webkit-text-stroke:0.25px #222;">876</div>
<div class="t" style="left:2651.70px;top:1486.11px;font-size:24.2px;color:#222222;letter-spacing:-0.55px;-webkit-text-stroke:0.25px #222;">11</div>
<div style="position:absolute;left:28px;top:1524.4px;width:2826px;height:2px;background:#e3e3e3"></div>
<div class="t" style="left:39.90px;top:1542.11px;font-size:24.2px;color:#222222;letter-spacing:-0.55px;-webkit-text-stroke:0.25px #222;">192.168.24.222</div>
<div class="t" style="left:301.00px;top:1542.11px;font-size:24.2px;color:#222222;letter-spacing:-0.55px;-webkit-text-stroke:0.25px #222;">192.16.160.118</div>
<div class="t" style="left:561.80px;top:1542.11px;font-size:24.2px;color:#222222;letter-spacing:-0.55px;-webkit-text-stroke:0.25px #222;">www.google.com</div>
<div class="t" style="left:997.70px;top:1542.11px;font-size:24.2px;color:#222222;letter-spacing:-0.55px;-webkit-text-stroke:0.25px #222;">dhcp-failover2</div>
<div class="t" style="left:1260.00px;top:1542.11px;font-size:24.2px;color:#222222;letter-spacing:-0.55px;-webkit-text-stroke:0.25px #222;">2822</div>
<div class="t" style="left:1436.30px;top:1542.11px;font-size:24.2px;color:#222222;letter-spacing:-0.55px;-webkit-text-stroke:0.25px #222;">847</div>
<div class="t" style="left:1612.00px;top:1542.11px;font-size:24.2px;color:#222222;letter-spacing:-0.55px;-webkit-text-stroke:0.25px #222;">TCP</div>
<div class="t" style="left:1785.70px;top:1542.11px;font-size:24.2px;color:#222222;letter-spacing:-0.55px;-webkit-text-stroke:0.25px #222;">0.697 ms</div>
<div class="t" style="left:2002.30px;top:1542.11px;font-size:24.2px;color:#222222;letter-spacing:-0.55px;-webkit-text-stroke:0.25px #222;">6.879 ms</div>
<div class="t" style="left:2218.90px;top:1542.11px;font-size:24.2px;color:#222222;letter-spacing:-0.55px;-webkit-text-stroke:0.25px #222;">1.88 KB</div>
<div class="t" style="left:2477.80px;top:1542.11px;font-size:24.2px;color:#222222;letter-spacing:-0.55px;-webkit-text-stroke:0.25px #222;">72</div>
<div class="t" style="left:2651.70px;top:1542.11px;font-size:24.2px;color:#222222;letter-spacing:-0.55px;-webkit-text-stroke:0.25px #222;">8</div>
<svg style="position:absolute;left:0;top:0" width="2880" height="1550"><path d="M 2761.50 187.40 A 9.0 9.0 0 1 1 2764.96 194.49" fill="none" stroke="#878c90" stroke-width="3.4"/><polygon points="2756.70,187.10 2766.90,187.10 2761.40,192.80" fill="#878c90"/><polygon points="2816.50,181.70 2825.50,181.70 2825.50,190.70" fill="#878c90" stroke="#878c90" stroke-width="1.2" stroke-linejoin="round"/><polygon points="2810.80,185.30 2810.80,194.30 2819.80,194.30" fill="#878c90" stroke="#878c90" stroke-width="1.2" stroke-linejoin="round"/><rect x="2563.2" y="176.4" width="37.7" height="26.8" fill="#f8f8f8" stroke="#767676" stroke-width="2"/><rect x="2564.5" y="200.6" width="35" height="2.6" fill="#a0a0a0"/><path d="M2565.5,188.3 L2570.8,192.5 L2577,189 L2585,187 L2590,185.2 L2598,181 L2598,200.6 L2565.5,200.6 Z" fill="#c3c5c5"/><path d="M2565.8,195.2 L2571,198.2 L2579.3,194.2 L2588,192.5 L2598,190.5 L2598,200.6 L2565.8,200.6 Z" fill="#5f6363"/><path d="M2565.5,188.6 L2570.8,192.2 L2577,188.8 L2585,186.8 L2590,185 L2597.8,181" fill="none" stroke="#7b7b7b" stroke-width="2.6"/><rect x="2623" y="190.1" width="7.0" height="10.1" fill="#c4c4c4"/><rect x="2625.0" y="191.1" width="3.0" height="9.1" fill="#cdcfcf"/><rect x="2630" y="186.4" width="7.0" height="13.8" fill="#c4c4c4"/><rect x="2632.0" y="187.4" width="3.0" height="12.8" fill="#cdcfcf"/><rect x="2637" y="182.3" width="7.2" height="17.9" fill="#c4c4c4"/><rect x="2639.0" y="183.3" width="3.2" height="16.9" fill="#cdcfcf"/><rect x="2644.2" y="177.3" width="6.2" height="22.9" fill="#c4c4c4"/><rect x="2646.2" y="178.3" width="2.2" height="21.9" fill="#cdcfcf"/><rect x="2650.4" y="181" width="6.4" height="19.2" fill="#c4c4c4"/><rect x="2652.4" y="182" width="2.4" height="18.2" fill="#cdcfcf"/><path d="M2681,189.3 C2685,185 2688,182.7 2690,182.7 C2694,182.7 2699,188.9 2702.4,188.9 L2715.6,178.6" fill="none" stroke="#9a9a9a" stroke-width="1.9"/><path d="M2680.6,192.6 C2684,190 2687,188.9 2690,188.9 C2695,188.9 2699,194.2 2702.4,194.2 C2707,194.2 2711,190 2715.6,188.5" fill="none" stroke="#929292" stroke-width="2.3"/><path d="M2680.6,197.1 C2684,196 2687,194.2 2690,194.2 C2695,194.2 2699,197.5 2702.4,197.5 C2707,197.5 2711,196.7 2715.6,196.7" fill="none" stroke="#8a8a8a" stroke-width="2.9"/><path d="M 2761.60 1171.50 A 9.0 9.0 0 1 1 2765.06 1178.59" fill="none" stroke="#878c90" stroke-width="3.4"/><polygon points="2756.80,1171.20 2767.00,1171.20 2761.50,1176.90" fill="#878c90"/><polygon points="2816.40,1165.80 2825.40,1165.80 2825.40,1174.80" fill="#878c90" stroke="#878c90" stroke-width="1.2" stroke-linejoin="round"/><polygon points="2811.20,1167.20 2811.20,1176.20 2820.20,1176.20" fill="#878c90" stroke="#878c90" stroke-width="1.2" stroke-linejoin="round"/><rect x="2746" y="1472" width="98" height="78" fill="#3aaa6e"/><rect x="2746" y="1472" width="98" height="8" fill="#4bbd84"/><path d="M2778.5,1501 L2778.5,1497 Q2778.5,1493.2 2782.5,1493.2 L2813.5,1493.2 Q2817.5,1493.2 2817.5,1497 L2817.5,1515.5 Q2817.5,1519.3 2813.5,1519.3 L2810,1519.3" fill="none" stroke="#dff1e7" stroke-width="2.2"/><path d="M2774.5,1504.2 L2806,1504.2 Q2810,1504.2 2810,1508 L2810,1526 Q2810,1530 2806,1530 L2789.5,1530 L2780.5,1539 L2780,1530 L2774.5,1530 Q2770.8,1530 2770.8,1526 L2770.8,1508 Q2770.8,1504.2 2774.5,1504.2 Z" fill="none" stroke="#dff1e7" stroke-width="2.2"/><path d="M2779,1512.5 L2791,1512.5 M2779,1517.7 L2801.5,1517.7 M2779,1522.7 L2801.5,1522.7" fill="none" stroke="#cfe9da" stroke-width="2.2"/></svg>
</body></html>
